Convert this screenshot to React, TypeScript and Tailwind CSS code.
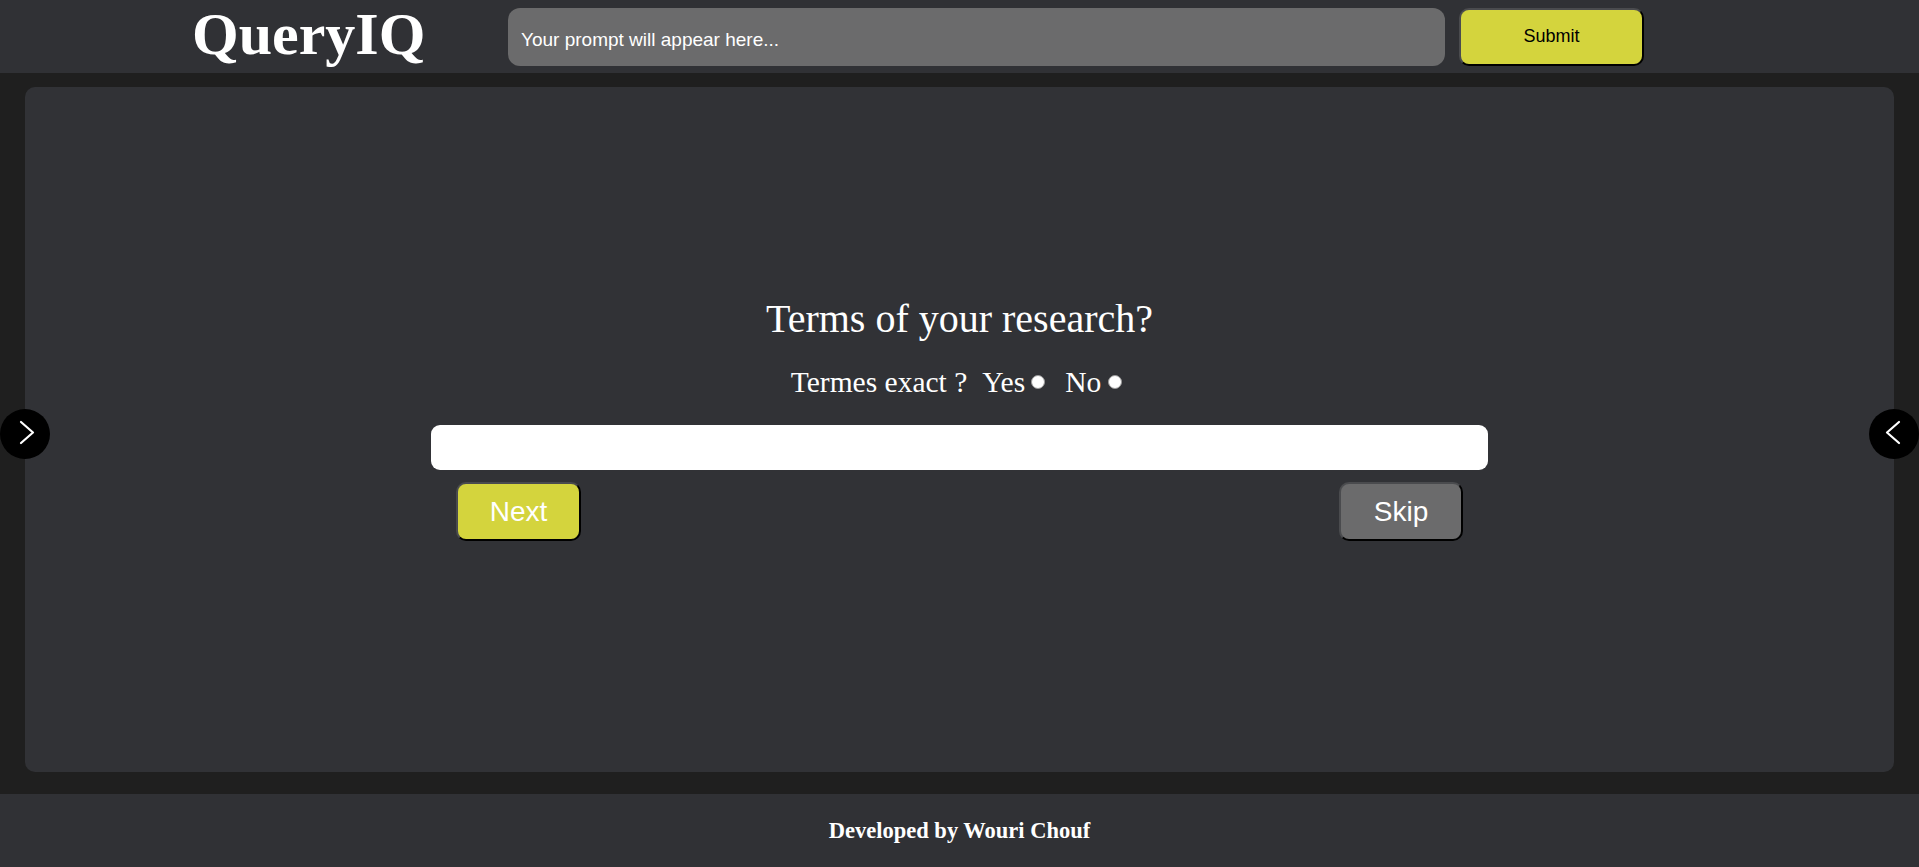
import React from "react";

const serif = { fontFamily: '"Liberation Serif", "Times New Roman", serif' };
const sans = { fontFamily: '"Liberation Sans", Arial, sans-serif' };

function Radio({ className = "" }: { className?: string }) {
  return (
    <span
      className={`inline-block w-[14px] h-[14px] rounded-full bg-white border border-[#9a9a9a] shrink-0 ${className}`}
    />
  );
}

function ArrowButton({ dir }: { dir: "left" | "right" }) {
  const points = dir === "right" ? "21,13 33,23.5 21,34" : "30,13 18,23.5 30,34";
  return (
    <button
      className={`absolute top-1/2 -translate-y-1/2 ${
        dir === "right" ? "left-0" : "right-0"
      } w-[50px] h-[50px] rounded-full bg-black flex items-center justify-center`}
    >
      <svg width="50" height="50" viewBox="0 0 50 50" className="block">
        <polyline
          points={points}
          fill="none"
          stroke="white"
          strokeWidth="2.2"
          strokeLinecap="round"
          strokeLinejoin="round"
        />
      </svg>
    </button>
  );
}

export default function App() {
  return (
    <div className="relative h-[867px] w-full flex flex-col bg-[#1f1f1f] overflow-hidden">
      {/* Header */}
      <header className="h-[73px] shrink-0 bg-[#303135] flex items-center">
        <div className="w-[508px] pl-[192px] shrink-0">
          <h1
            className="text-[60px] leading-[69px] font-bold text-white -mt-[4px]"
            style={serif}
          >
            QueryIQ
          </h1>
        </div>
        <div
          className="w-[937px] h-[58px] rounded-[12px] bg-[#6b6b6c] flex items-center pl-[13px] pt-[8px] text-white text-[19px]"
          style={sans}
        >
          Your prompt will appear here...
        </div>
        <button
          className="ml-[14px] w-[185px] h-[58px] rounded-[10px] bg-[#d4d43d] text-black text-[18px] border-2 border-t-[#4a4b4e] border-l-[#4a4b4e] border-b-black border-r-black"
          style={sans}
        >
          Submit
        </button>
      </header>

      {/* Main */}
      <main className="flex-1 pt-[14px] pb-[22px] px-[25px] flex">
        <div className="flex-1 rounded-[10px] bg-[#313236] flex flex-col items-center pt-[209px]">
          <h2 className="text-[40px] leading-[46px] text-white" style={serif}>
            Terms of your research?
          </h2>
          <div
            className="mt-[23px] flex items-center text-[29.5px] leading-[34px] text-white"
            style={serif}
          >
            <span className="mr-[15px]">Termes exact ?</span>
            <span>Yes</span>
            <Radio className="ml-[6px]" />
            <span className="ml-[20px]">No</span>
            <Radio className="ml-[7px] mr-[6px]" />
          </div>
          <div className="mt-[26px] w-[1057px] h-[45px] rounded-[9px] bg-white" />
          <div className="mt-[12px] w-[1057px] px-[25px] flex justify-between">
            <button
              className="w-[125px] h-[59px] rounded-[10px] bg-[#d4d43d] text-white text-[28px] border-2 border-t-[#4a4b4e] border-l-[#4a4b4e] border-b-black border-r-black"
              style={sans}
            >
              Next
            </button>
            <button
              className="w-[124px] h-[59px] rounded-[10px] bg-[#6b6b6c] text-white text-[28px] border-2 border-t-[#4a4b4e] border-l-[#4a4b4e] border-b-black border-r-black"
              style={sans}
            >
              Skip
            </button>
          </div>
        </div>
      </main>

      {/* Footer */}
      <footer className="h-[73px] shrink-0 bg-[#303135] flex items-center justify-center">
        <p className="text-[22.5px] font-bold text-white" style={serif}>
          Developed by Wouri Chouf
        </p>
      </footer>

      <ArrowButton dir="right" />
      <ArrowButton dir="left" />
    </div>
  );
}
